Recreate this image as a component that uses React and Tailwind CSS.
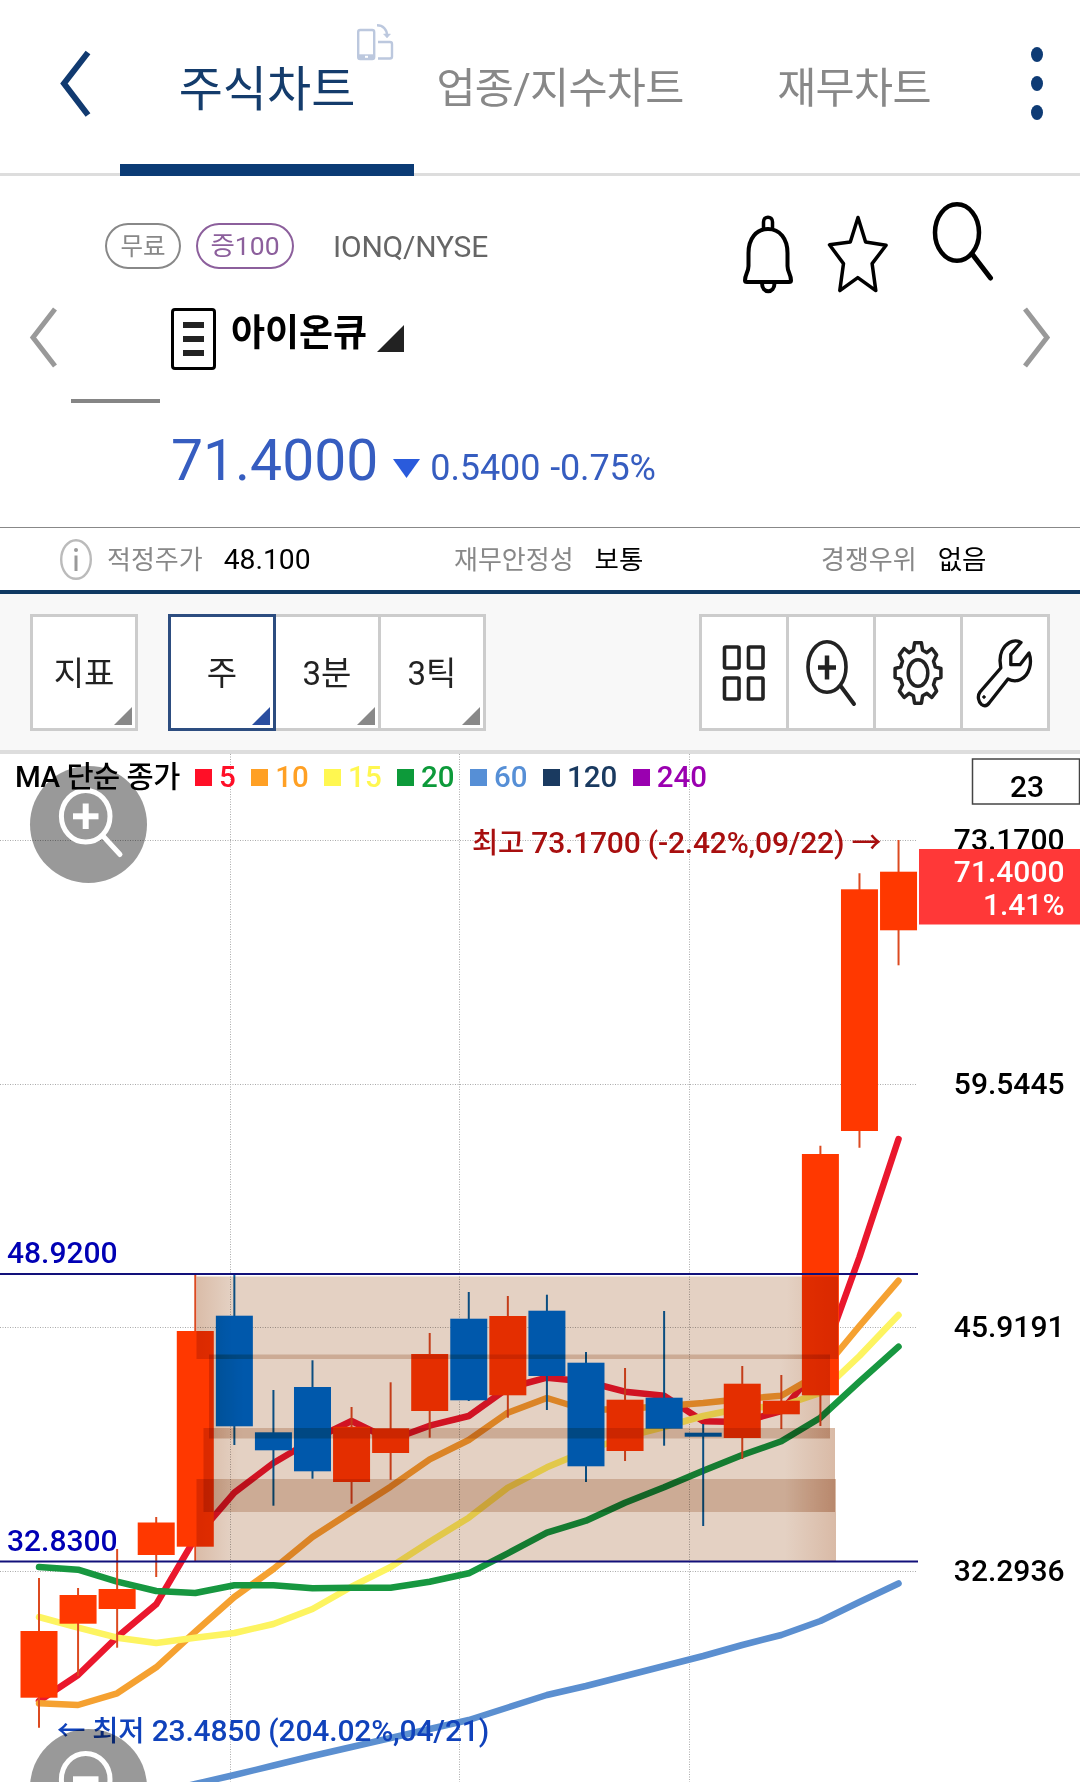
import React from 'react';

const tabs = [
  { label: '주식차트', active: true },
  { label: '업종/지수차트' },
  { label: '재무차트' },
];

const averages = [
  { label: '5', color: '#ff0f27' },
  { label: '10', color: '#ffa024' },
  { label: '15', color: '#fff750' },
  { label: '20', color: '#0d9a3a' },
  { label: '60', color: '#568fd6' },
  { label: '120', color: '#1a3a60' },
  { label: '240', color: '#9a00b0' },
];

// [wick top, body top, body bottom, wick bottom, direction]
const candles = [
  [1578, 1631, 1697.7, 1727.7, 1],
  [1588, 1595, 1623.7, 1676, 1],
  [1549, 1589, 1609, 1647.7, 1],
  [1517, 1522.5, 1555, 1577, 1],
  [1274, 1331, 1546.7, 1561, 1],
  [1274, 1315.7, 1426.3, 1445, 0],
  [1390, 1432.3, 1450.3, 1505.7, 0],
  [1360.3, 1387, 1471.3, 1478.7, 0],
  [1407, 1426.7, 1482, 1503.7, 1],
  [1382.3, 1428.3, 1453, 1479.7, 1],
  [1333, 1354, 1411, 1437.7, 1],
  [1292, 1318.7, 1400.3, 1401, 0],
  [1296, 1316, 1395.3, 1417.7, 1],
  [1294.7, 1310.7, 1376, 1410, 0],
  [1352, 1362.7, 1466.3, 1482, 0],
  [1368, 1399.7, 1451, 1461, 1],
  [1311, 1397.7, 1428.7, 1445.7, 0],
  [1424, 1432.7, 1436.7, 1526, 0],
  [1366, 1383.7, 1438, 1459, 1],
  [1375, 1400.7, 1414.3, 1429, 1],
  [1145.7, 1154, 1395.3, 1426, 1],
  [873.3, 889.3, 1131, 1147.7, 1],
  [840, 871.7, 930.3, 965.3, 1],
];

const lines = [
  {
    color: '#5b8fd0',
    values: [1793, 1784, 1775, 1765.5, 1756, 1747, 1738, 1729, 1720, 1707.5, 1695, 1686, 1676, 1666, 1656, 1645, 1635, 1621, 1602, 1583.5],
    skip: 3,
  },
  {
    color: '#ea172d',
    values: [1701, 1675, 1637, 1604.3, 1538, 1492.7, 1463, 1440, 1421, 1440, 1425.7, 1416, 1388, 1377.7, 1381.5, 1391.7, 1395.7, 1421.3, 1422, 1411, 1365, 1257, 1139],
  },
  {
    color: '#f5a131',
    values: [1703.3, 1705, 1693.3, 1667.3, 1631.7, 1597, 1569, 1537, 1511.7, 1486.7, 1459.3, 1440, 1412.7, 1398, 1410, 1409, 1406, 1403, 1399, 1395.7, 1373, 1326, 1280.7],
  },
  {
    color: '#fdf461',
    values: [1617, 1627.7, 1637.7, 1643, 1637.7, 1633, 1624, 1609, 1586.7, 1567, 1541.7, 1517.7, 1487.7, 1467.3, 1451, 1437, 1427, 1416, 1408, 1406, 1393, 1356, 1315],
  },
  {
    color: '#179740',
    values: [1567, 1569.7, 1581.7, 1591, 1593, 1585.3, 1585.3, 1588.3, 1587.7, 1587.7, 1581.7, 1573.3, 1553.3, 1532.7, 1520.7, 1502.7, 1487.3, 1470.7, 1455, 1441.3, 1417.7, 1381.7, 1346.7],
  },
];

const zones = [
  { x: 196.5, y: 1276.5, w: 641.5, h: 82.5 },
  { x: 209, y: 1354.5, w: 621, h: 84 },
  { x: 203.5, y: 1428, w: 631.5, h: 84 },
  { x: 196.5, y: 1479, w: 639.5, h: 82 },
];

const priceLabels = [
  { y: 849.8, label: '73.1700' },
  { y: 1093.7, label: '59.5445' },
  { y: 1336.8, label: '45.9191' },
  { y: 1580.8, label: '32.2936' },
];

const candleX = (i) => 39 + i * 39.07;

const gearPath = () => {
  const pts = [];
  for (let i = 0; i < 8; i += 1) {
    const c = i * 45;
    [[-15, 23.5], [-8.5, 30.5], [8.5, 30.5], [15, 23.5]].forEach(([d, r]) => {
      const a = ((c + d) * Math.PI) / 180;
      pts.push(`${(27 + Math.sin(a) * r * 0.76).toFixed(1)} ${(34 - Math.cos(a) * r).toFixed(1)}`);
    });
  }
  return `M${pts.join('L')}Z`;
};

const Header = () => (
  <header className="flex h-[176px] border-b-[3px] border-[#dddddd]">
    <button className="flex w-[120px] shrink-0 items-start pt-[50px] pl-[58px]">
      <svg width="34" height="68" viewBox="0 0 34 68" fill="none" stroke="#113a70" strokeWidth="6">
        <path d="M30 2.500 6 33.500 30 65" />
      </svg>
    </button>
    {tabs.map((tab) => (
      <div
        key={tab.label}
        className={
          tab.active
            ? 'relative flex h-[176px] w-[294px] justify-center border-b-[12px] border-[#0b3b75] pt-[65px] text-[48px] leading-[50px] text-[#143c6c]'
            : 'flex h-[176px] w-[294px] justify-center pt-[64px] pr-[2px] text-[42.5px] leading-[50px] tracking-[-0.7px] text-[#888888]'
        }
      >
        {tab.label}
        {tab.active && (
          <svg className="absolute top-[22px] left-[235px]" width="40" height="40" viewBox="355 22 40 40" fill="none" stroke="#bcc8de" strokeWidth="2.4">
            <rect x="358.2" y="30" width="16" height="29" rx="2" />
            <path d="M358 56.8h16" strokeWidth="5" />
            <path d="M365 56.8h3" stroke="#fff" strokeWidth="2" />
            <path d="M378 42h12a2 2 0 0 1 2 2v12.500a2 2 0 0 1-2 2h-12" />
            <path d="M377 25.300c6 0 10 4 10 10" />
            <path d="M383.500 34h7l-3.500 4z" fill="#bcc8de" strokeWidth="0.5" />
          </svg>
        )}
      </div>
    ))}
    <button className="flex flex-col gap-[14px] pt-[47px] pl-[29px]">
      <span className="h-[15px] w-3 rounded-[50%] bg-[#0e3b75]" />
      <span className="h-[15px] w-3 rounded-[50%] bg-[#0e3b75]" />
      <span className="h-[15px] w-3 rounded-[50%] bg-[#0e3b75]" />
    </button>
  </header>
);

const StockInfo = () => (
  <section className="h-[351px]">
    <div className="flex h-[124px] items-start pl-[105px]">
      <span className="mt-[47px] flex h-[46px] w-[76px] items-center justify-center rounded-full border-[2.5px] border-[#888888] pt-[2px] text-[24.5px] leading-none text-[#888888]">
        무료
      </span>
      <span className="mt-[47px] ml-[15px] flex h-[46px] w-[98px] items-center justify-center rounded-full border-[2.5px] border-[#8c5f9c] pt-px text-[26.5px] leading-none text-[#8c5f9c]">
        증100
      </span>
      <span className="mt-[54px] ml-[39px] text-[30px] leading-[34px] tracking-[-0.2px] text-[#666666]">IONQ/NYSE</span>
      <svg className="mt-[24px] mr-[84px] ml-auto" width="256" height="96" viewBox="740 200 256 96" fill="none" stroke="#000" strokeWidth="4" strokeLinejoin="round" strokeLinecap="round">
        <path d="M763.500 228v-6c0-6.500 9-6.500 9 0v6" strokeWidth="3.500" />
        <path d="M768 229c-12 0-19.500 10-19.500 24v13c0 6-3.500 8-3.500 14.500q0 1.500 2 1.500h42q2 0 2-1.500c0-6.500-3.500-8.500-3.500-14.500v-13c0-14-7.500-24-19.500-24z" />
        <path d="M762 283c0 11 12.500 11 12.500 0" />
        <path d="M858 217.500l7.600 24.600 20.500 3.200-14 18.300 3.700 27-18-13-18 13 3.700-27-14-18.800 20.800-2.700z" strokeWidth="3.500" />
        <ellipse cx="957" cy="232.500" rx="22" ry="28.200" strokeWidth="4.500" />
        <path d="M972.500 254.500l18 23.500" strokeWidth="5" />
      </svg>
    </div>

    <div className="flex h-[74px] items-start pt-[7px] pl-[28px]">
      <svg width="30" height="62" viewBox="0 0 30 62" fill="none" stroke="#999999" strokeWidth="5">
        <path d="M27 2 5 30.500 27 59" />
      </svg>
      <div className="mt-px ml-[113px] flex h-[62px] w-[45px] flex-col items-center justify-center gap-2 rounded-[4px] border-[3px] border-black">
        <span className="h-[6px] w-[21px] bg-[#222222]" />
        <span className="h-[6px] w-[21px] bg-[#222222]" />
        <span className="h-[6px] w-[21px] bg-[#222222]" />
      </div>
      <h1 className="mt-[7px] ml-[15px] text-[37px] leading-[40px] font-bold text-black">아이온큐</h1>
      <svg className="mt-[18px] ml-[10px]" width="27" height="27">
        <path d="M27 0v27H0z" fill="#222222" />
      </svg>
      <svg className="mr-[28px] ml-auto" width="30" height="62" viewBox="0 0 30 62" fill="none" stroke="#999999" strokeWidth="5">
        <path d="M3 2 25 30.500 3 59" />
      </svg>
    </div>

    <div className="mt-[25px] ml-[71px] h-1 w-[89px] bg-[#858585]" />

    <div className="flex items-baseline pt-[25px] pl-[171px] text-[#365dc0]">
      <span className="text-[57px] leading-[66px]">71.4000</span>
      <svg className="mt-[31px] ml-[15px] self-start" width="27" height="19">
        <path d="M0 0h27L13.500 19z" fill="#2a5bdc" />
      </svg>
      <span className="ml-[10px] text-[36px] leading-[40px] tracking-[-0.1px]">0.5400</span>
      <span className="ml-[10px] text-[36px] leading-[40px] tracking-[-0.2px]">-0.75%</span>
    </div>
  </section>
);

const Metric = ({ label, value, className, valueClass }) => (
  <div className={className}>
    <span className="text-[26px] text-[#888888]">{label}</span>
    <span className={valueClass}>{value}</span>
  </div>
);

const FairValue = () => (
  <section className="flex h-[67px] items-center border-t border-b-4 border-t-[#888888] border-b-[#103a63] leading-none">
    <svg className="ml-[59px] shrink-0" width="34" height="43" viewBox="0 0 34 43" fill="none" stroke="#bbbbbb" strokeWidth="2.400">
      <ellipse cx="17" cy="21.500" rx="14.800" ry="19.300" />
      <path d="M17 17.500v15.500" stroke="#999999" strokeWidth="3" />
      <circle cx="17" cy="12" r="2" fill="#999999" stroke="none" />
    </svg>
    <Metric className="ml-[14px] flex w-[347px] items-baseline gap-[21px] pt-[3px]" valueClass="text-[28.3px] text-black" label="적정주가" value="48.100" />
    <Metric className="flex w-[367px] items-baseline gap-[21px] pt-[3px]" valueClass="text-[26.5px] text-black" label="재무안정성" value="보통" />
    <Metric className="flex items-baseline gap-[21px] pt-[3px]" valueClass="text-[26.5px] text-black" label="경쟁우위" value="없음" />
  </section>
);

const PeriodButton = ({ label, active, className }) => (
  <button className={`relative flex h-[117px] items-center justify-center border-[3px] bg-white pt-[2px] text-[33px] leading-none text-[#222222] ${className}`}>
    {label}
    <svg className="absolute right-[3px] bottom-[3px]" width="18" height="18">
      <path d="M18 0v18H0z" fill={active ? '#2a4ea0' : '#888888'} />
    </svg>
  </button>
);

const Toolbar = () => (
  <section className="flex h-[160px] items-start border-b-4 border-[#dddddd] bg-[#f8f8f8] px-[30px] pt-5">
    <PeriodButton label="지표" className="w-[108px] border-[#cccccc]" />
    <div className="ml-[30px] flex">
      <PeriodButton label="주" active className="w-[108px] border-[#2d4d80]" />
      <PeriodButton label="3분" className="w-[105px] border-l-0 border-[#cccccc]" />
      <PeriodButton label="3틱" className="w-[105px] border-l-0 border-[#cccccc]" />
    </div>
    <div className="ml-auto flex h-[117px] w-[351px] divide-x-[3px] divide-[#cccccc] border-[3px] border-[#cccccc] bg-white">
      <button className="flex flex-1 items-center justify-center">
        <svg width="44" height="58" viewBox="0 0 44 58" fill="none" stroke="#222222" strokeWidth="3.600">
          <rect x="2.500" y="3" width="14.500" height="21" rx="1.500" />
          <rect x="26.500" y="3" width="14.500" height="21" rx="1.500" />
          <rect x="2.500" y="34" width="14.500" height="21" rx="1.500" />
          <rect x="26.500" y="34" width="14.500" height="21" rx="1.500" />
        </svg>
      </button>
      <button className="flex flex-1 items-center justify-center">
        <svg width="54" height="68" viewBox="-1 0 54 68" fill="none" stroke="#222222" strokeWidth="3.600" strokeLinecap="round">
          <ellipse cx="22" cy="28" rx="19" ry="25.300" />
          <path d="M36 47.500l13 17.500" strokeWidth="4" />
          <path d="M13 28.500h18M22 16.500v24" strokeWidth="4.500" strokeLinecap="butt" />
        </svg>
      </button>
      <button className="flex flex-1 items-center justify-center">
        <svg width="54" height="68" viewBox="0 0 54 68" fill="none" stroke="#222222" strokeWidth="3.500" strokeLinejoin="round">
          <path d={gearPath()} />
          <ellipse cx="27" cy="34" rx="9.800" ry="13.200" />
        </svg>
      </button>
      <button className="flex flex-1 items-center justify-center">
        <svg width="60" height="70" viewBox="976 638 60 70" fill="none" stroke="#111111" strokeWidth="3.300" strokeLinejoin="round">
          <path d="M1022 642.500c-3-2-8-2-11.500 0c-7 4-9.500 12-9.500 18l.8 7.500-20.800 24c-3 4-1.500 10 1.500 12.500c3 2 6 1 8-2l18.500-23.500c4 2 9 2.200 12.500 .5c9-4 12-17 8.500-26.500l-9 11.700h-9.200v-10.400z" />
          <circle cx="985" cy="697" r="1.300" fill="#111111" strokeWidth="1" />
        </svg>
      </button>
    </div>
  </section>
);

const ZoomBadge = ({ cy, plus }) => (
  <g>
    <circle cx="88.500" cy={cy} r="58.500" fill="#000" fillOpacity="0.4" />
    <g fill="none" stroke="#fff">
      <ellipse cx="85.700" cy={cy - 8.2} rx="24.300" ry="25.800" strokeWidth="5" />
      <path d={`M73 ${cy - 8.2}h25.500`} strokeWidth="6" />
      {plus && <path d={`M85.700 ${cy - 21}v25.500`} strokeWidth="6" />}
      <path d={`M103 ${cy + 11.5}l17 18.500`} strokeWidth="5" strokeLinecap="round" />
    </g>
  </g>
);

const Chart = () => (
  <section className="relative h-[1028px] overflow-hidden bg-white">
    <svg width="1080" height="1028" viewBox="0 754 1080 1028" className="block font-medium" fontSize="30">
      <defs>
        <linearGradient id="zone">
          <stop offset="0" stopColor="#dabca8" />
          <stop offset="0.055" stopColor="#e4d1c3" />
          <stop offset="0.92" stopColor="#e4d1c3" />
          <stop offset="1" stopColor="#d9baa6" />
        </linearGradient>
      </defs>

      <g stroke="#aaaaaa" strokeWidth="1" strokeDasharray="1 1.500">
        {[840.5, 1084.5, 1327.5, 1571.5].map((y) => (
          <path key={y} d={`M0 ${y}H917`} />
        ))}
        {[230.5, 459.5, 689.5].map((x) => (
          <path key={x} d={`M${x} 754V1782`} />
        ))}
      </g>

      {lines.map((line) => (
        <polyline
          key={line.color}
          points={line.values.map((v, i) => `${candleX(i + (line.skip || 0))},${v}`).join(' ')}
          fill="none"
          stroke={line.color}
          strokeWidth="6.500"
          strokeLinecap="round"
          strokeLinejoin="round"
        />
      ))}

      {candles.map(([high, top, bottom, low, up], i) => (
        <g key={i}>
          <path d={`M${candleX(i)} ${high}V${low}`} stroke={up ? '#dc4a20' : '#0b5ea8'} strokeWidth="2" />
          <rect x={candleX(i) - 18.5} y={top} width="37" height={bottom - top} fill={up ? '#ff3800' : '#006be0'} />
        </g>
      ))}

      <g className="mix-blend-multiply">
        {zones.map((z) => (
          <rect key={z.y} x={z.x} y={z.y} width={z.w} height={z.h} fill="url(#zone)" className="mix-blend-multiply" />
        ))}
      </g>

      <path d="M0 1274H918M0 1561.500H918" stroke="#12107a" strokeWidth="2" />

      <g fill="#0000b4">
        <text x="7" y="1262.500">48.9200</text>
        <text x="7" y="1550.500">32.8300</text>
      </g>
      <text x="472" y="852.500" fill="#a80f0f" letterSpacing="-0.2">
        <tspan fontSize="28.500">최고</tspan> 73.1700 (-2.42%,09/22) →
      </text>
      <text x="57" y="1740.500" fill="#1042bb" letterSpacing="-0.170">
        <tspan fontSize="28.500">← 최저</tspan> 23.4850 (204.02%,04/21)
      </text>

      <g textAnchor="end">
        {priceLabels.map((p) => (
          <text key={p.label} x="1064.500" y={p.y}>{p.label}</text>
        ))}
        <rect x="919" y="849" width="161" height="75.500" fill="#ff3838" />
        <text x="1064.500" y="882" fill="#fff">71.4000</text>
        <text x="1064.500" y="915" fill="#fff">1.41%</text>
      </g>
      <rect x="972.500" y="759" width="107" height="45" fill="#fff" stroke="#444444" strokeWidth="1.500" />
      <text x="1027" y="796.700" textAnchor="middle">23</text>

      <ZoomBadge cy={824.5} plus />
      <ZoomBadge cy={1787.5} />
    </svg>

    {/* Moving average legend */}
    <div className="absolute top-[6px] left-[15px] flex items-center text-[29.500px] leading-[35px] font-medium">
      <span className="mr-[15px] w-[165px] tracking-[-0.5px] whitespace-nowrap">MA 단순 종가</span>
      {averages.map((ma) => (
        <span key={ma.label} className="mr-[15.4px] flex items-center" style={{ color: ma.color }}>
          <span className="mr-[7px] h-[17px] w-[17px] bg-current" />
          {ma.label}
        </span>
      ))}
    </div>
  </section>
);

const App = () => (
  <div className="h-[1782px] w-[1080px] overflow-hidden bg-white text-black [font-family:Roboto,'Noto_Sans_CJK_KR',sans-serif]">
    <Header />
    <StockInfo />
    <FairValue />
    <Toolbar />
    <Chart />
  </div>
);

export default App;
